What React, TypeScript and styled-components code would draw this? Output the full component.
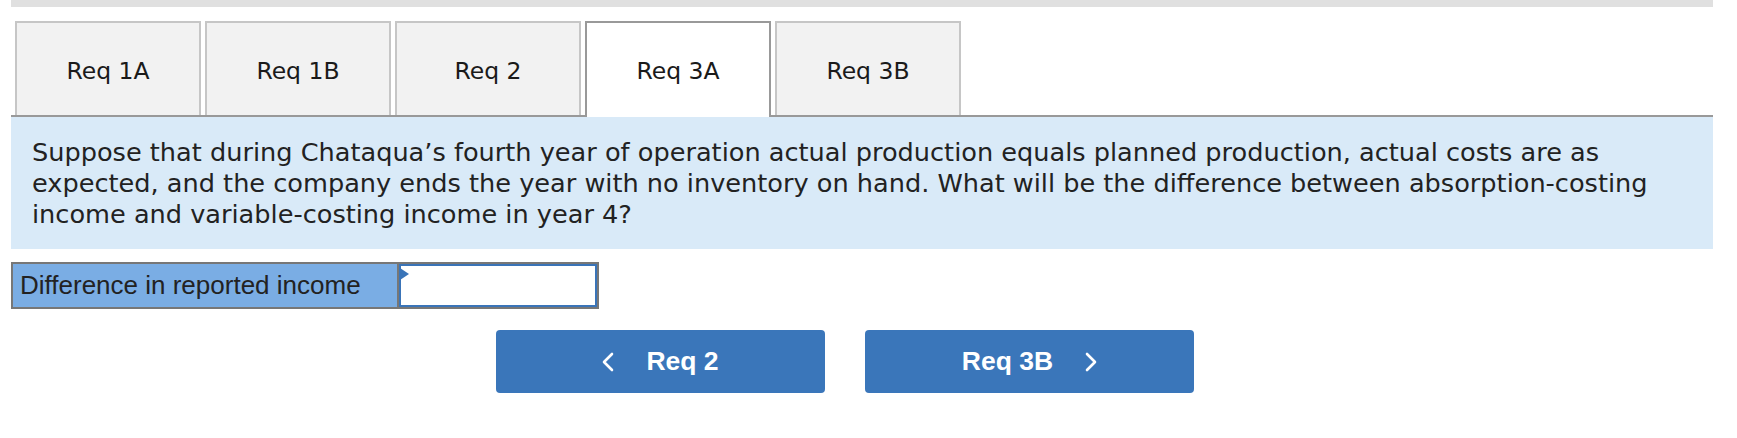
import styled, { createGlobalStyle } from "styled-components";

const GlobalStyle = createGlobalStyle`
  body {
    margin: 0;
    background: #fff;
    font-family: "DejaVu Sans", Verdana, sans-serif;
    color: #222;
  }
`;

const tabs = ["Req 1A", "Req 1B", "Req 2", "Req 3A", "Req 3B"];
const activeTab = "Req 3A";

export default function App() {
  return (
    <>
      <GlobalStyle />
      <Page>
        <TopBar />
        <TabBar>
          {tabs.map((t) => (
            <Tab key={t} $active={t === activeTab}>
              {t}
            </Tab>
          ))}
        </TabBar>
        <Question>
          Suppose that during Chataqua’s fourth year of operation actual
          production equals planned production, actual costs are as expected,
          and the company ends the year with no inventory on hand. What will be
          the difference between absorption-costing income and variable-costing
          income in year 4?
        </Question>
        <AnswerTable>
          <AnswerLabel>Difference in reported income</AnswerLabel>
          <AnswerCell>
            <AnswerInput type="text" aria-label="Difference in reported income" />
            <Marker />
          </AnswerCell>
        </AnswerTable>
        <NavRow>
          <NavButton>
            <Chevron viewBox="0 0 12 20">
              <polyline points="10,2 2,10 10,18" />
            </Chevron>
            <span>Req 2</span>
          </NavButton>
          <NavButton>
            <span>Req 3B</span>
            <Chevron viewBox="0 0 12 20">
              <polyline points="2,2 10,10 2,18" />
            </Chevron>
          </NavButton>
        </NavRow>
      </Page>
    </>
  );
}

const Page = styled.div`
  width: 1702px;
  margin-left: 11px;
  display: flex;
  flex-direction: column;
`;

const TopBar = styled.div`
  height: 7px;
  background: #e0e0e0;
  margin-bottom: 14px;
`;

const TabBar = styled.div`
  display: flex;
  gap: 4px;
  padding-left: 4px;
  border-bottom: 2px solid #999;
`;

const Tab = styled.div<{ $active?: boolean }>`
  width: 186px;
  height: ${(p) => (p.$active ? "96px" : "94px")};
  margin-bottom: ${(p) => (p.$active ? "-2px" : "0")};
  box-sizing: border-box;
  border: 2px solid ${(p) => (p.$active ? "#999" : "#c6c6c6")};
  border-bottom: none;
  background: ${(p) => (p.$active ? "#fff" : "#f2f2f2")};
  display: flex;
  align-items: center;
  justify-content: center;
  padding-top: ${(p) => (p.$active ? "2px" : "4px")};
  font-size: 23.5px;
  color: #1a1a1a;
  cursor: pointer;
`;

const Question = styled.div`
  background: #d9eaf8;
  padding: 20px 20px 19px 21px;
  font-size: 25.6px;
  line-height: 31px;
  color: #222;
`;

const AnswerTable = styled.div`
  margin-top: 13px;
  width: 588px;
  height: 47px;
  box-sizing: border-box;
  border: 2px solid #777;
  display: flex;
`;

const AnswerLabel = styled.div`
  flex: 0 0 386px;
  box-sizing: border-box;
  border-right: 2px solid #777;
  background: #7aade4;
  padding-left: 7px;
  display: flex;
  align-items: center;
  font-family: "Liberation Sans", Arial, sans-serif;
  font-size: 26px;
  color: #222;
  white-space: nowrap;
`;

const AnswerCell = styled.div`
  flex: 1 1 0;
  min-width: 0;
  position: relative;
  display: flex;
`;

const AnswerInput = styled.input`
  width: 100%;
  min-width: 0;
  margin: 0;
  box-sizing: border-box;
  border: 2px solid #3a74b8;
  background: #fff;
  outline: none;
  font-family: "Liberation Sans", Arial, sans-serif;
  font-size: 22px;
  padding: 0 8px;
`;

const Marker = styled.span`
  position: absolute;
  left: 1px;
  top: 4px;
  width: 0;
  height: 0;
  border-top: 6px solid transparent;
  border-bottom: 6px solid transparent;
  border-left: 9px solid #3a74b8;
`;

const NavRow = styled.div`
  display: flex;
  gap: 40px;
  margin-top: 21px;
  padding-left: 485px;
`;

const NavButton = styled.button`
  width: 329px;
  height: 63px;
  border: none;
  border-radius: 4px;
  background: #3a76ba;
  color: #fff;
  display: flex;
  align-items: center;
  justify-content: center;
  gap: 32px;
  font-family: "Liberation Sans", Arial, sans-serif;
  font-weight: bold;
  font-size: 26.5px;
  cursor: pointer;
  padding: 0;
`;

const Chevron = styled.svg`
  width: 12px;
  height: 20px;
  fill: none;
  stroke: #fff;
  stroke-width: 2.6;
  stroke-linecap: round;
  stroke-linejoin: round;
`;
